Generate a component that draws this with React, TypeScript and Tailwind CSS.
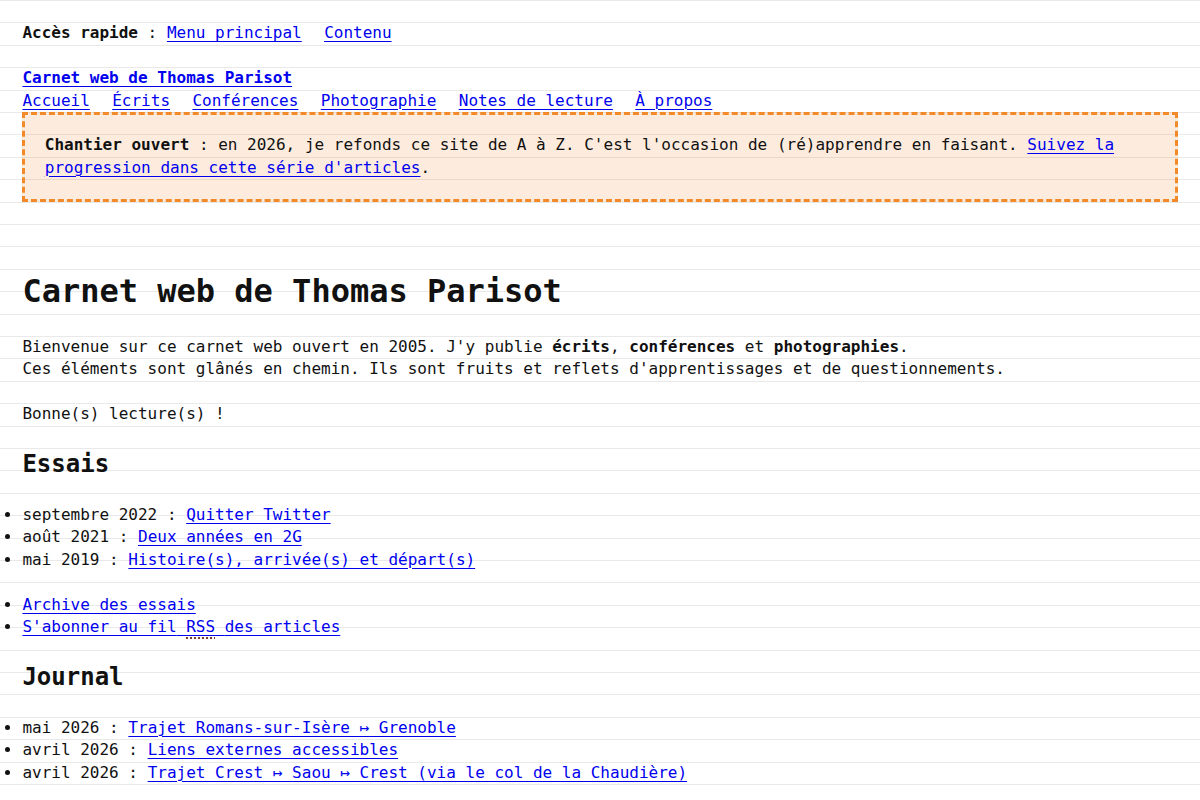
import React from 'react';

const link = 'text-[#0000ee] underline decoration-1 underline-offset-[3px]';

interface Entry {
  date: string;
  title: React.ReactNode;
}

const essais: Entry[] = [
  { date: 'septembre 2022', title: 'Quitter Twitter' },
  { date: 'août 2021', title: 'Deux années en 2G' },
  { date: 'mai 2019', title: 'Histoire(s), arrivée(s) et départ(s)' },
];

const journal: Entry[] = [
  { date: 'mai 2026', title: 'Trajet Romans-sur-Isère ↦ Grenoble' },
  { date: 'avril 2026', title: 'Liens externes accessibles' },
  { date: 'avril 2026', title: 'Trajet Crest ↦ Saou ↦ Crest (via le col de la Chaudière)' },
];

const EntryList: React.FC<{ items: Entry[] }> = ({ items }) => (
  <ul className="list-disc -ml-[22.4px] pl-[22.4px]">
    {items.map((item, i) => (
      <li key={i}>
        {item.date} :{' '}
        <a href="#" className={link}>
          {item.title}
        </a>
      </li>
    ))}
  </ul>
);

const App: React.FC = () => {
  return (
    <div className="min-h-screen bg-white bg-[repeating-linear-gradient(to_bottom,#e9e9e9_0,#e9e9e9_1px,transparent_1px,transparent_22.4px)] px-[22.4px] pt-[22.4px] pb-[44.8px] font-['DejaVu_Sans_Mono',monospace] text-[16px] leading-[22.4px] text-[#111]">
      {/* accès rapide */}
      <div className="flex gap-[22.4px]">
        <span>
          <strong>Accès rapide</strong> :{' '}
          <a href="#" className={link}>Menu principal</a>
        </span>
        <a href="#" className={link}>Contenu</a>
      </div>

      <header className="mt-[22.4px]">
        <a href="#" className={`${link} font-bold`}>Carnet web de Thomas Parisot</a>
        <nav className="flex gap-[22.4px]">
          {['Accueil', 'Écrits', 'Conférences', 'Photographie', 'Notes de lecture', 'À propos'].map((n) => (
            <a key={n} href="#" className={link}>{n}</a>
          ))}
        </nav>
        <div className="border-[3px] border-dashed border-[#f28a2a] bg-[rgba(242,138,42,0.16)] px-[19.4px] py-[19.4px]">
          <strong>Chantier ouvert</strong> : en 2026, je refonds ce site de A à Z. C'est l'occasion de (ré)apprendre en faisant.{' '}
          <a href="#" className={link}>Suivez la progression dans cette série d'articles</a>.
        </div>
      </header>

      <main>
        <h1 className="mt-[67.2px] mb-[22.4px] text-[32px] leading-[44.8px] font-bold">Carnet web de Thomas Parisot</h1>
        <p>
          Bienvenue sur ce carnet web ouvert en 2005. J'y publie <strong>écrits</strong>, <strong>conférences</strong> et{' '}
          <strong>photographies</strong>.
          <br />
          Ces éléments sont glânés en chemin. Ils sont fruits et reflets d'apprentissages et de questionnements.
        </p>
        <p className="mt-[22.4px]">Bonne(s) lecture(s) !</p>

        <h2 className="my-[22.4px] text-[24px] leading-[33.6px] font-bold">Essais</h2>
        <EntryList items={essais} />
        <ul className="mt-[22.4px] list-disc -ml-[22.4px] pl-[22.4px]">
          <li>
            <a href="#" className={link}>Archive des essais</a>
          </li>
          <li>
            <a href="#" className={link}>
              S'abonner au fil{' '}
              <abbr title="Really Simple Syndication" className="no-underline">
                <span className="underline decoration-dotted decoration-2 decoration-[#7d3b2c] underline-offset-[6px]">RSS</span>
              </abbr>{' '}
              des articles
            </a>
          </li>
        </ul>

        <h2 className="my-[22.4px] text-[24px] leading-[33.6px] font-bold">Journal</h2>
        <EntryList items={journal} />
      </main>
    </div>
  );
};

export default App;
